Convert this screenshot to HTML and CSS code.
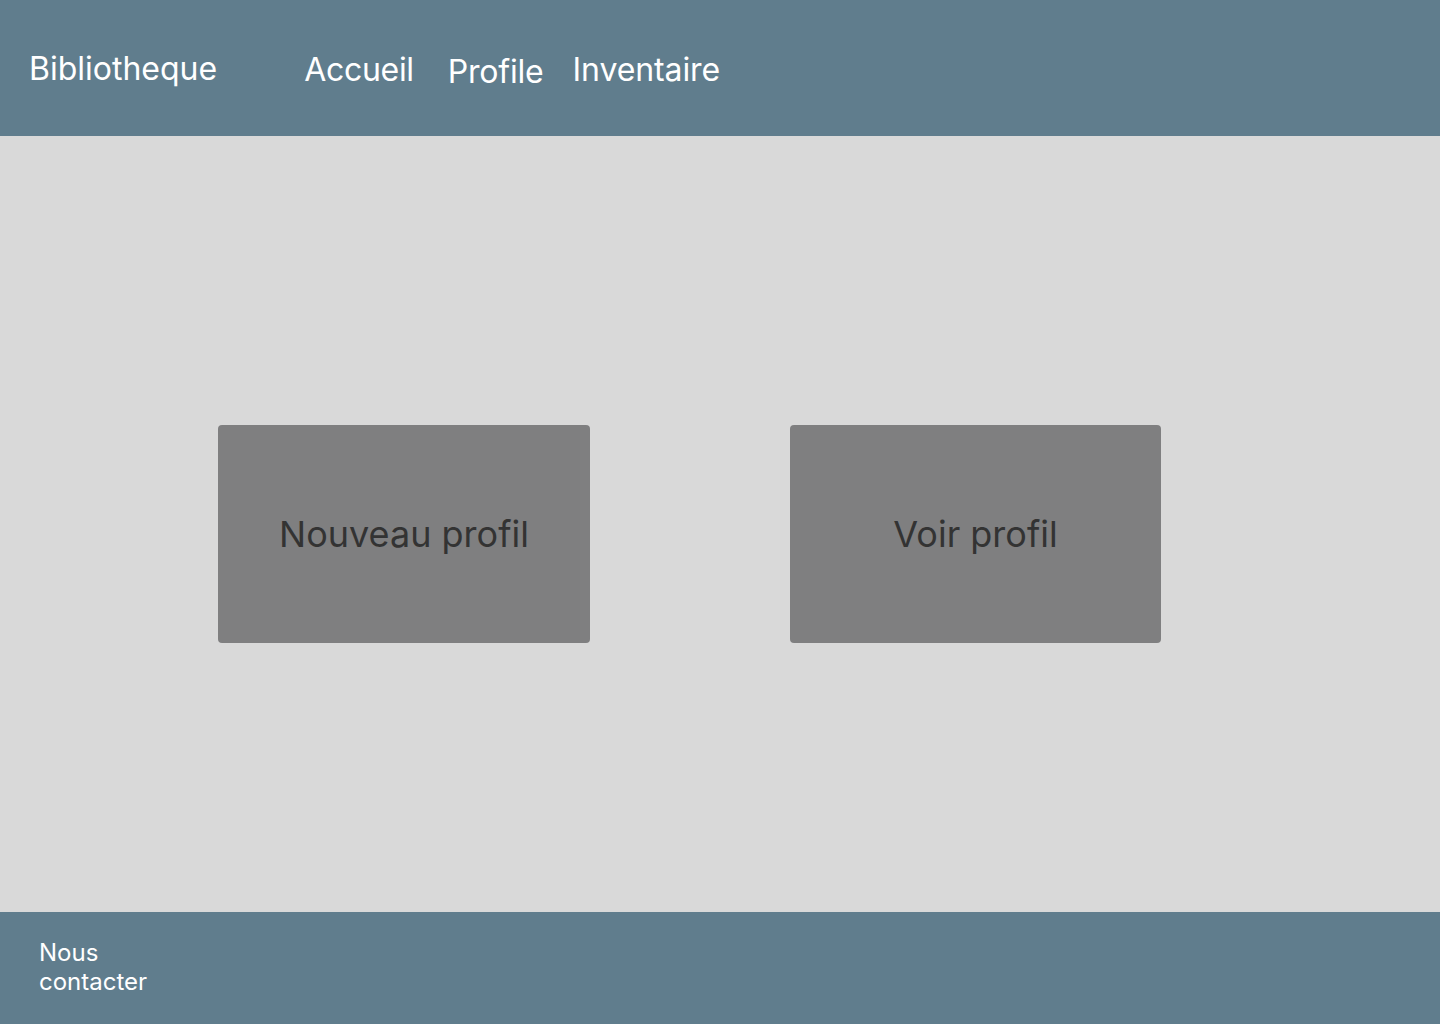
FILE: index.html
```html
<!DOCTYPE html>
<html lang="fr">
<head>
<meta charset="utf-8">
<title>Bibliotheque - Profile</title>
<link rel="stylesheet" href="styles.css">
</head>
<body>
<header class="topbar">
  <div class="brand">Bibliotheque</div>
  <nav class="nav">
    <a class="nav-link nav-accueil" href="#">Accueil</a>
    <a class="nav-link nav-profile" href="#">Profile</a>
    <a class="nav-link nav-inventaire" href="#">Inventaire</a>
  </nav>
</header>
<main class="content">
  <div class="actions">
    <a class="action-card card-new" href="#">Nouveau profil</a>
    <a class="action-card card-view" href="#">Voir profil</a>
  </div>
</main>
<footer class="footer">
  <a class="footer-link" href="#">Nous<br>contacter</a>
</footer>
</body>
</html>
```
FILE: styles.css
```css
* { box-sizing: border-box; }
html, body { margin: 0; padding: 0; }
body {
  width: 1440px;
  height: 1024px;
  display: flex;
  flex-direction: column;
  font-family: Inter, "Noto Sans", sans-serif;
  background: #d9d9d9;
}
a { text-decoration: none; color: inherit; }

.topbar {
  height: 136px;
  background: #607d8d;
  color: #ffffff;
  display: flex;
  align-items: center;
  padding: 3px 0 0 29px;
  flex: none;
}
.brand {
  font-size: 32px;
  line-height: 40px;
  margin-top: -1px;
}
.nav {
  display: flex;
  align-items: center;
  margin-left: 87px;
}
.nav-link {
  font-size: 32px;
  line-height: 40px;
}
.nav-accueil { letter-spacing: -0.3px; }
.nav-profile { margin-left: 34px; margin-top: 5px; letter-spacing: -0.2px; }
.nav-inventaire { margin-left: 29px; letter-spacing: -0.1px; }

.content {
  flex: 1;
  display: flex;
  align-items: center;
  padding: 20px 0 0 218px;
}
.actions {
  display: flex;
  gap: 200px;
}
.action-card {
  width: 372px;
  height: 218px;
  background: #7f7f80;
  border-radius: 4px;
  display: flex;
  align-items: center;
  justify-content: center;
  font-size: 36px;
  color: #333333;
}
.card-view { width: 371px; }

.footer {
  height: 112px;
  background: #607d8d;
  color: #ffffff;
  flex: none;
  padding: 26px 0 0 39px;
}
.footer-link {
  display: block;
  font-size: 24px;
  line-height: 29px;
}
```
